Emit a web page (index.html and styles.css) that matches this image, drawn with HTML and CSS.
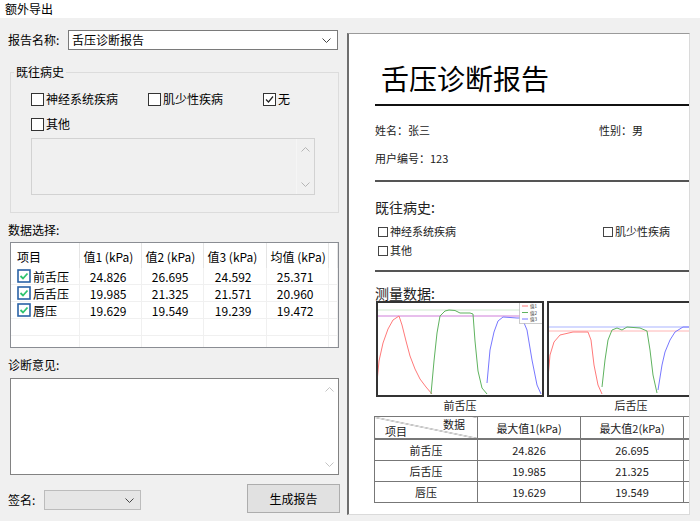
FILE: index.html
```html
<!DOCTYPE html>
<html>
<head>
    <meta charset="utf-8">
    <title>额外导出</title>
    <link rel="stylesheet" href="styles.css">
</head>
<body>
    <div class="titlebar">额外导出</div>

    <div class="window">
        <!-- left: settings -->
        <div class="left">
            <div class="field-row">
                <span class="label">报告名称:</span>
                <div class="combo wide">
                    <span>舌压诊断报告</span>
                    <svg class="chev" width="9" height="5" viewBox="0 0 9 5"><path d="M0.5 0.5 L4.5 4.5 L8.5 0.5" fill="none" stroke="#444" stroke-width="1"/></svg>
                </div>
            </div>

            <div class="group">
                <div class="group-title">既往病史</div>
                <div class="check-grid">
                    <div class="check"><span class="box"></span>神经系统疾病</div>
                    <div class="check"><span class="box"></span>肌少性疾病</div>
                    <div class="check"><span class="box"><svg width="11" height="11" viewBox="0 0 11 11"><path d="M2 5.5 L4.5 8 L9 2.5" fill="none" stroke="#222" stroke-width="1.2"/></svg></span>无</div>
                    <div class="check"><span class="box"></span>其他</div>
                </div>
                <div class="memo disabled">
                    <div class="memo-body"></div>
                    <div class="scroll">
                        <svg width="9" height="5" viewBox="0 0 9 5"><path d="M0.5 4.5 L4.5 0.5 L8.5 4.5" fill="none" stroke="#b5b5b5"/></svg>
                        <svg width="9" height="5" viewBox="0 0 9 5"><path d="M0.5 0.5 L4.5 4.5 L8.5 0.5" fill="none" stroke="#b5b5b5"/></svg>
                    </div>
                </div>
            </div>

            <div class="section-label">数据选择:</div>
            <div class="list">
                <table class="grid">
                    <colgroup>
                        <col style="width:68px"><col style="width:62px"><col style="width:62px">
                        <col style="width:63px"><col style="width:62px"><col>
                    </colgroup>
                    <thead>
                        <tr><th class="first">项目</th><th>值1 (kPa)</th><th>值2 (kPa)</th><th>值3 (kPa)</th><th>均值 (kPa)</th><th></th></tr>
                    </thead>
                    <tbody id="rows"></tbody>
                </table>
            </div>

            <div class="section-label">诊断意见:</div>
            <div class="memo opinion">
                <div class="memo-body"></div>
                <div class="scroll">
                    <svg width="9" height="5" viewBox="0 0 9 5"><path d="M0.5 4.5 L4.5 0.5 L8.5 4.5" fill="none" stroke="#c4c4c4"/></svg>
                    <svg width="9" height="5" viewBox="0 0 9 5"><path d="M0.5 0.5 L4.5 4.5 L8.5 0.5" fill="none" stroke="#c4c4c4"/></svg>
                </div>
            </div>

            <div class="footer">
                <div class="sign">
                    <span class="sign-label">签名:</span>
                    <div class="combo small">
                        <span></span>
                        <svg class="chev" width="9" height="5" viewBox="0 0 9 5"><path d="M0.5 0.5 L4.5 4.5 L8.5 0.5" fill="none" stroke="#444" stroke-width="1"/></svg>
                    </div>
                </div>
                <button class="btn">生成报告</button>
            </div>
        </div>

        <!-- right: report preview -->
        <div class="right">
            <div class="preview">
                <div class="page">
                    <h1>舌压诊断报告</h1>
                    <div class="rule heavy"></div>
                    <div class="info first"><span>姓名：张三</span><span>性别：男</span></div>
                    <div class="info"><span>用户编号：123</span></div>
                    <div class="rule"></div>

                    <h2 class="h-history">既往病史:</h2>
                    <div class="p-checks">
                        <span><i class="pbox"></i>神经系统疾病</span>
                        <span><i class="pbox"></i>肌少性疾病</span>
                        <span><i class="pbox"></i>其他</span>
                    </div>
                    <div class="rule"></div>

                    <h2 class="h-data">测量数据:</h2>
                    <div class="charts">
                        <figure class="chart">
                            <svg width="168" height="96" viewBox="0 0 168 96">
                                <line x1="1" y1="9" x2="167" y2="9" stroke="#cfe8cf" stroke-width="1"/>
                                <line x1="1" y1="15" x2="167" y2="15" stroke="#cf7fd9" stroke-width="1"/>
                                <polyline fill="none" stroke="#ff7a7a" stroke-width="1" points="1,81 3,60 7,42 12,28 17,19 23,15 26,24 30,40 34,55 39,68 44,78 50,86 56,93"/>
                                <polyline fill="none" stroke="#5fb35f" stroke-width="1" points="55,93 58,60 61,32 64,15 69,10 73,9 79,9.5 84,12 94,12 97,13 99,40 102,70 106,87 111,93"/>
                                <polyline fill="none" stroke="#7777ff" stroke-width="1" points="111,82 114,49 118,31 122,20 127,16 141,17 146,17 151,29 156,59 161,84 165,93"/>
                                <rect x="143.5" y="1.5" width="23" height="21" fill="#fff" stroke="#aaa" stroke-width="0.6"/>
                                <line x1="146" y1="5" x2="152" y2="5" stroke="#ff7a7a"/>
                                <line x1="146" y1="11.5" x2="152" y2="11.5" stroke="#5fb35f"/>
                                <line x1="146" y1="18" x2="152" y2="18" stroke="#7777ff"/>
                                <text x="154" y="7" class="legend">值1</text>
                                <text x="154" y="13.5" class="legend">值2</text>
                                <text x="154" y="20" class="legend">值3</text>
                                <rect x="1" y="1" width="166" height="94" fill="none" stroke="#333" stroke-width="2"/>
                            </svg>
                            <figcaption>前舌压</figcaption>
                        </figure>
                        <figure class="chart">
                            <svg width="168" height="96" viewBox="0 0 168 96">
                                <line x1="1" y1="26" x2="167" y2="26" stroke="#a9b3ff" stroke-width="1"/>
                                <line x1="1" y1="30" x2="167" y2="30" stroke="#ffb4b4" stroke-width="1"/>
                                <polyline fill="none" stroke="#ff7a7a" stroke-width="1" points="1,77 3,54 7,41 13,34 26,31 41,31 44,39 47,64 51,84 55,93"/>
                                <polyline fill="none" stroke="#5fb35f" stroke-width="1" points="55,86 58,59 61,39 65,29 70,27 75,29 80,26 93,27 100,30 103,49 106,74 110,92"/>
                                <polyline fill="none" stroke="#7777ff" stroke-width="1" points="111,89 115,64 118,51 123,39 128,31 136,26 142,26 150,28 158,40 165,70"/>
                                <rect x="1" y="1" width="166" height="94" fill="none" stroke="#333" stroke-width="2"/>
                            </svg>
                            <figcaption>后舌压</figcaption>
                        </figure>
                    </div>

                    <table class="p-table">
                        <colgroup><col style="width:103px"><col style="width:103px"><col style="width:103px"><col style="width:103px"></colgroup>
                        <tr class="head">
                            <td class="diag"><div class="d-top">数据</div><div class="d-bot">项目</div></td>
                            <td>最大值1(kPa)</td><td>最大值2(kPa)</td><td></td>
                        </tr>
                        <tr><td>前舌压</td><td>24.826</td><td>26.695</td><td></td></tr>
                        <tr><td>后舌压</td><td>19.985</td><td>21.325</td><td></td></tr>
                        <tr><td>唇压</td><td>19.629</td><td>19.549</td><td></td></tr>
                    </table>
                </div>
            </div>
        </div>
    </div>

    <script>
        // rows for the data list
        var data = [
            ["前舌压", "24.826", "26.695", "24.592", "25.371"],
            ["后舌压", "19.985", "21.325", "21.571", "20.960"],
            ["唇压", "19.629", "19.549", "19.239", "19.472"]
        ];
        var tick = '<svg class="tick" width="14" height="14" viewBox="0 0 14 14"><rect x="1" y="1" width="12" height="12" fill="#fff" stroke="#2a62a6" stroke-width="1.6"/><path d="M3.5 7 L6 9.5 L10.5 4.5" fill="none" stroke="#2fc46f" stroke-width="1.8"/></svg>';
        var html = "";
        data.forEach(function (r) {
            html += '<tr><td class="first"><span class="item">' + tick + r[0] + '</span></td>';
            for (var i = 1; i < r.length; i++) html += '<td class="num">' + r[i] + '</td>';
            html += '<td></td></tr>';
        });
        for (var k = 0; k < 2; k++) html += '<tr><td></td><td></td><td></td><td></td><td></td><td></td></tr>';
        document.getElementById("rows").innerHTML = html;
    </script>
</body>
</html>
```

FILE: styles.css
```css
body {
    margin: 0;
    width: 700px;
    height: 521px;
    overflow: hidden;
    font-family: "Noto Sans CJK SC", "Noto Sans", sans-serif;
    font-size: 12px;
    color: #000;
    background: #f0f0f0;
}

.titlebar {
    height: 18px;
    line-height: 18px;
    padding-left: 5px;
    background: #fff;
}

.window {
    display: flex;
    height: 503px;
}

/* left side */
.left {
    flex: none;
    width: 347px;
    box-sizing: border-box;
    padding: 12px 0 0 8px;
}

.field-row {
    display: flex;
    align-items: center;
    height: 20px;
}

.label {
    width: 60px;
    line-height: 16px;
}

.combo {
    display: flex;
    align-items: center;
    justify-content: space-between;
    box-sizing: border-box;
    height: 20px;
    padding: 0 6px 0 3px;
    border: 1px solid #7a7a7a;
    background: #fff;
    line-height: 16px;
}

.combo.wide {
    width: 270px;
}

.combo.small {
    width: 97px;
    border-color: #bcbcbc;
    background: #e6e6e6;
}

.chev {
    display: block;
}

.group {
    width: 329px;
    box-sizing: border-box;
    margin: 22px 0 0 2px;
    padding: 0 0 17px 20px;
    border: 1px solid #dcdcdc;
}

.group-title {
    width: fit-content;
    margin: -8px 0 0 -17px;
    padding: 0 2px;
    line-height: 14px;
    background: #f0f0f0;
}

.check-grid {
    display: grid;
    grid-template-columns: 117px 115px auto;
    row-gap: 9px;
    margin-top: 12px;
}

.check {
    display: flex;
    align-items: center;
    height: 16px;
    line-height: 16px;
}

.box {
    display: flex;
    align-items: center;
    justify-content: center;
    width: 13px;
    height: 13px;
    box-sizing: border-box;
    margin-right: 2px;
    border: 1px solid #333;
    background: #fff;
}

.memo {
    display: flex;
    box-sizing: border-box;
}

.memo-body {
    flex: 1;
}

.memo.disabled {
    width: 284px;
    height: 57px;
    margin-top: 6px;
    border: 1px solid #d2d2d2;
    background: #f0f0f0;
}

.memo.disabled .scroll {
    padding: 8px 0 7px;
    border-left: 1px solid #f5f5f5;
}

.memo.opinion {
    width: 329px;
    height: 97px;
    margin: 5px 0 0 2px;
    border: 1px solid #828282;
    background: #fff;
}

.memo.opinion .scroll {
    padding: 8px 0 7px;
}

.scroll {
    display: flex;
    flex-direction: column;
    justify-content: space-between;
    align-items: center;
    width: 17px;
}

.scroll svg {
    display: block;
}

.section-label {
    margin-top: 9px;
    line-height: 16px;
}

.list {
    width: 329px;
    height: 106px;
    box-sizing: border-box;
    margin: 4px 0 0 2px;
    border: 1px solid #8a8d93;
    background: #fff;
    overflow: hidden;
}

.grid {
    width: 100%;
    border-collapse: collapse;
    table-layout: fixed;
}

.grid th {
    height: 23px;
    padding: 2px 0 0 4px;
    font-weight: normal;
    text-align: left;
    border-right: 1px solid #e5e5e5;
    line-height: 16px;
}

.grid th.first {
    padding-left: 6px;
}

.grid td {
    height: 16px;
    padding: 0;
    border-right: 1px solid #f0f0f0;
    border-bottom: 1px solid #f0f0f0;
    line-height: 15px;
}

.grid td.first {
    padding-left: 6px;
}

.grid td.num {
    padding-right: 14px;
    text-align: right;
}

.item {
    display: flex;
    align-items: center;
    gap: 2px;
}

.tick {
    display: block;
}

.footer {
    display: flex;
    align-items: center;
    justify-content: space-between;
    width: 332px;
    margin-top: 9px;
}

.sign {
    display: flex;
    align-items: center;
    margin-top: 3px;
}

.sign-label {
    width: 36px;
    line-height: 16px;
}

.btn {
    width: 93px;
    height: 29px;
    padding: 0;
    border: 1px solid #adadad;
    background: #e1e1e1;
    font-family: inherit;
    font-size: 12px;
    color: #000;
}

/* right side: preview */
.right {
    flex: 1;
    min-width: 0;
    box-sizing: border-box;
    padding: 15px 10px 0 0;
}

.preview {
    height: 482px;
    box-sizing: border-box;
    border-top: 1px solid #9a9a9a;
    border-left: 2px solid #6e6e6e;
    border-right: 1px solid #dadada;
    border-bottom: 1px solid #dadada;
    background: #fff;
    overflow: hidden;
}

.page {
    width: 460px;
    padding-left: 26px;
}

.page h1 {
    margin: 27px 0 0 6px;
    font-size: 28px;
    line-height: 34px;
    font-weight: normal;
}

.rule {
    height: 2px;
    margin-top: 15px;
    background: #555;
}

.rule.heavy {
    margin-top: 9px;
    background: #111;
}

.info {
    display: grid;
    grid-template-columns: 224px auto;
    margin-top: 14px;
    font-size: 11px;
    line-height: 14px;
    color: #222;
}

.info.first {
    margin-top: 17px;
}

.page h2 {
    margin: 0;
    font-size: 14px;
    font-weight: normal;
    color: #222;
}

.h-history {
    margin-top: 16px !important;
    line-height: 18px;
}

.h-data {
    margin-top: 13px !important;
    line-height: 16px;
}

.p-checks {
    display: grid;
    grid-template-columns: 225px auto;
    row-gap: 5px;
    margin: 8px 0 0 3px;
    font-size: 11px;
    line-height: 14px;
    color: #222;
}

.p-checks + .rule {
    margin-top: 13px;
}

.pbox {
    display: inline-block;
    width: 8px;
    height: 8px;
    margin-right: 2px;
    border: 1px solid #444;
    vertical-align: -1px;
}

.charts {
    display: flex;
    gap: 3px;
    margin-left: 1px;
}

.chart {
    margin: 0;
    width: 168px;
    flex: none;
}

.chart svg {
    display: block;
}

.legend {
    font-size: 4.5px;
    fill: #333;
}

.chart figcaption {
    margin-top: 1px;
    font-size: 11px;
    line-height: 14px;
    text-align: center;
    color: #222;
}

.p-table {
    margin: 4px 0 0 -1px;
    border-collapse: collapse;
    table-layout: fixed;
    font-size: 11px;
    color: #222;
}

.p-table td {
    height: 20px;
    padding: 0;
    border: 1px solid #777;
    text-align: center;
    line-height: 14px;
}

.p-table tr.head td {
    height: 21px;
    border-bottom-width: 2px;
}

.p-table td.diag {
    background: linear-gradient(to top right, transparent calc(50% - 0.6px), #777 50%, transparent calc(50% + 0.6px));
}

.d-top {
    padding-right: 12px;
    text-align: right;
    line-height: 12px;
}

.d-bot {
    margin-top: -5px;
    padding-left: 10px;
    text-align: left;
    line-height: 12px;
}
```
